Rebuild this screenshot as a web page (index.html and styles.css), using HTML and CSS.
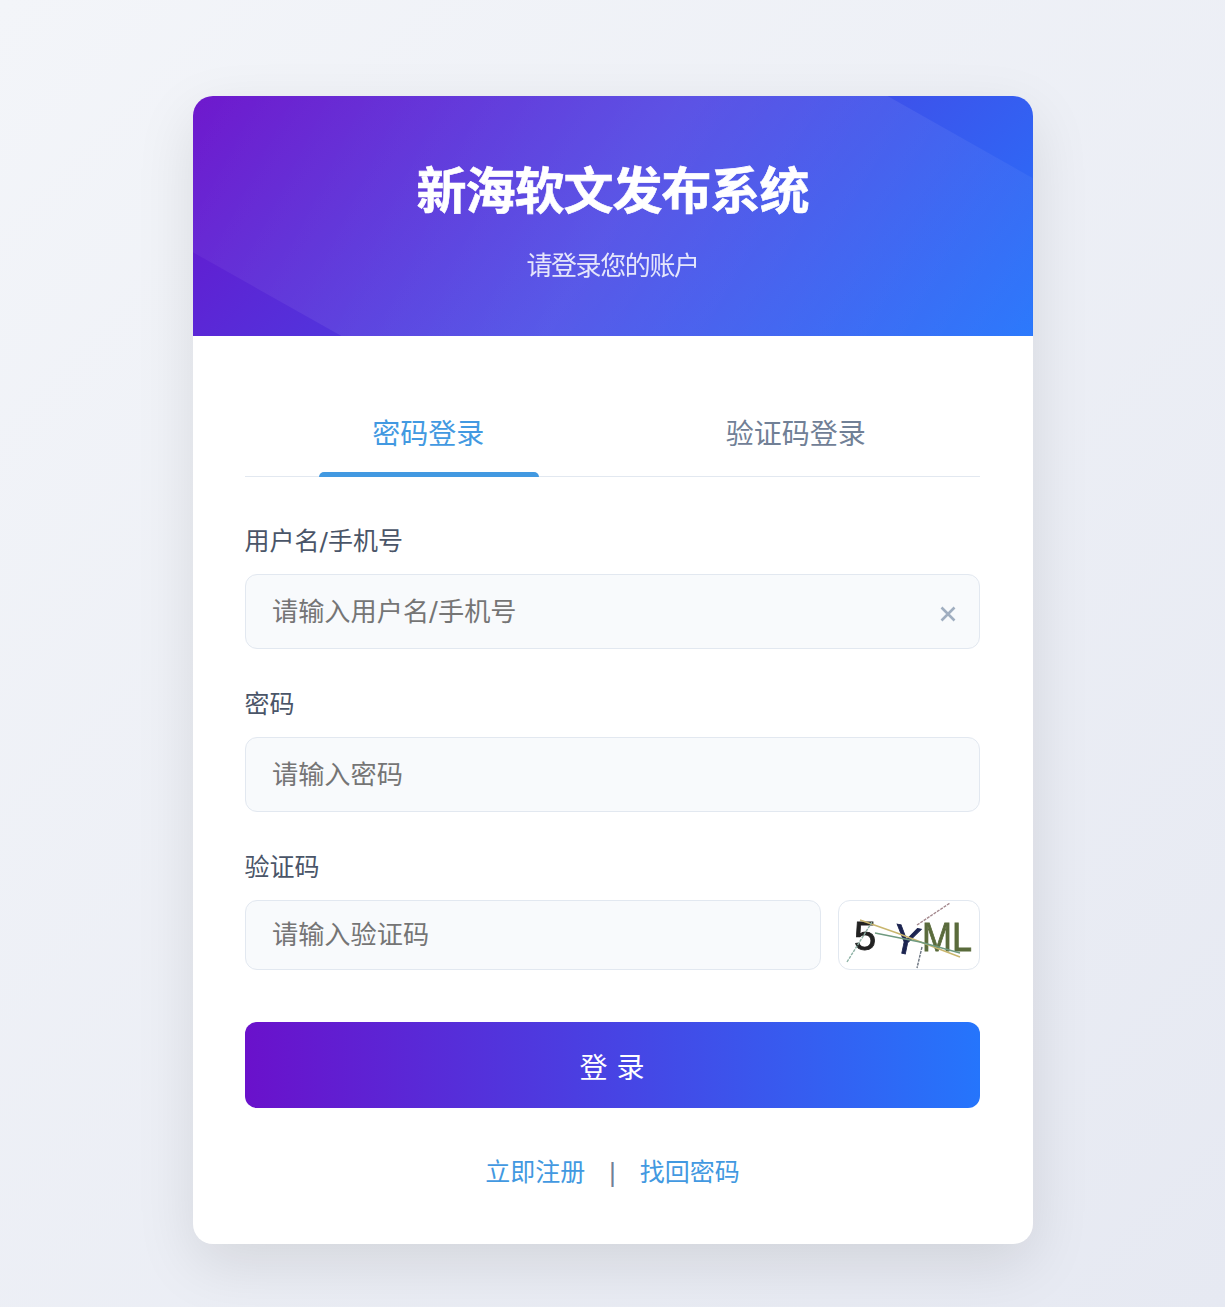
FILE: index.html
```html
<!DOCTYPE html>
<html lang="zh-CN">

<head>
    <meta charset="UTF-8">
    <meta name="viewport" content="width=device-width, initial-scale=1.0">
    <title>新海软文发布系统</title>
    <link rel="stylesheet" href="styles.css">
</head>

<body>
    <div class="card">
        <div class="header">
            <h1>新海软文发布系统</h1>
            <p>请登录您的账户</p>
        </div>

        <div class="content">
            <div class="tabs">
                <div class="tab active">密码登录</div>
                <div class="tab">验证码登录</div>
            </div>

            <form class="form">
                <div class="field">
                    <label for="username">用户名/手机号</label>
                    <div class="inputWrap">
                        <input type="text" id="username" placeholder="请输入用户名/手机号">
                        <svg class="clear" width="16" height="16" viewBox="0 0 16 16">
                            <path d="M1.5 1.5 14.5 14.5M14.5 1.5 1.5 14.5" />
                        </svg>
                    </div>
                </div>

                <div class="field">
                    <label for="password">密码</label>
                    <input type="password" id="password" placeholder="请输入密码">
                </div>

                <div class="field">
                    <label for="code">验证码</label>
                    <div class="codeRow">
                        <input type="text" id="code" class="short" placeholder="请输入验证码">
                        <div class="captcha">
                            <svg width="140" height="68" viewBox="0 0 140 68">
                                <g class="fuzzy">
                                    <text x="15" y="49" class="c1">5</text>
                                    <text x="54" y="53" class="c2" transform="rotate(12 68 40)">Y</text>
                                    <text x="83" y="50" class="c3" textLength="50" lengthAdjust="spacingAndGlyphs">ML</text>
                                    <path d="M21 19 L58 32 L121 56" stroke="#c9b66e" />
                                    <path d="M8 61 L33 21" stroke="#8fb3a6" stroke-dasharray="3 1" />
                                    <path d="M36 32 L81 41 L121 52" stroke="#6f9a80" />
                                    <path d="M78 24 L111 2" stroke="#a58a8f" stroke-dasharray="3 1" />
                                    <path d="M83 46 L78 67" stroke="#6b7480" stroke-dasharray="3 1" />
                                </g>
                            </svg>
                        </div>
                    </div>
                </div>

                <button type="button" class="btn">登 录</button>
            </form>

            <div class="links">
                <a href="#">立即注册</a>
                <span class="sep">|</span>
                <a href="#">找回密码</a>
            </div>
        </div>
    </div>
</body>

</html>
```

FILE: styles.css
```css
/* Reset CSS */
* {
    margin: 0;
    padding: 0;
    box-sizing: border-box;
}

body {
    font-family: "DejaVu Sans", "Noto Sans CJK SC", sans-serif;
    background: linear-gradient(135deg, #f3f5f9, #e6e9f2);
    min-height: 1307px;
    display: flex;
    justify-content: center;
    padding-top: 96px;
}

.card {
    width: 840px;
    height: 1148px;
    background: #fff;
    border-radius: 20px;
    overflow: hidden;
    box-shadow: 0 20px 60px rgba(0, 0, 0, 0.1);
}

.header {
    position: relative;
    height: 240px;
    padding-top: 62px;
    text-align: center;
    color: #fff;
    background: linear-gradient(135deg, #6a11cb, #2575fc);
}

.header::before {
    content: "";
    position: absolute;
    inset: 0;
    background: linear-gradient(120deg, rgba(255, 255, 255, 0.03), rgba(255, 255, 255, 0.1), rgba(255, 255, 255, 0.03));
    clip-path: polygon(0 0, 695px 0, 840px 82px, 840px 240px, 149px 240px, 0 156px);
}

.header h1,
.header p {
    position: relative;
}

.header h1 {
    font-size: 50px;
    line-height: 68px;
    letter-spacing: -1px;
    font-weight: 700;
    -webkit-text-stroke: 0.6px #fff;
}

.header p {
    margin-top: 23px;
    font-size: 26px;
    line-height: 34px;
    letter-spacing: -1.4px;
    opacity: 0.85;
}

.content {
    padding: 61px 53px 0 52px;
}

.tabs {
    display: flex;
    height: 80px;
    border-bottom: 1px solid #e2e8f0;
}

.tab {
    position: relative;
    flex: 1;
    text-align: center;
    font-size: 28px;
    line-height: 76px;
    color: #718096;
}

.tab.active {
    color: #4299e1;
}

.tab.active::after {
    content: "";
    position: absolute;
    left: 74px;
    bottom: -1px;
    width: 220px;
    height: 5px;
    background: #4299e1;
    border-radius: 5px 5px 0 0;
}

.form {
    margin-top: 46px;
}

.field {
    margin-bottom: 37px;
}

.field label {
    display: block;
    padding-top: 1px;
    margin-bottom: 15px;
    font-size: 25px;
    line-height: 35px;
    color: #4a5568;
}

.field:last-of-type {
    margin-bottom: 0;
}

.inputWrap {
    position: relative;
}

input {
    display: block;
    width: 100%;
    height: 75px;
    padding: 0 26.5px;
    font-family: inherit;
    font-size: 26.2px;
    color: #2d3748;
    background: #f8fafc;
    border: 1px solid #e2e8f0;
    border-radius: 12px;
    outline: none;
}

.clear {
    position: absolute;
    right: 24px;
    top: 32px;
}

.clear path {
    fill: none;
    stroke: #a0aec0;
    stroke-width: 2.6;
}

.codeRow {
    display: flex;
    gap: 17px;
}

input.short {
    flex: 1;
    width: auto;
    height: 70px;
}

.captcha {
    width: 142px;
    height: 70px;
    background: #fff;
    border: 1px solid #e2e8f0;
    border-radius: 12px;
    overflow: hidden;
}

.captcha svg {
    display: block;
}

.fuzzy {
    filter: blur(0.7px);
}

.fuzzy text {
    font-family: "Liberation Sans", sans-serif;
    font-size: 40px;
    stroke-width: 0.8px;
}

.fuzzy path {
    fill: none;
    stroke-width: 1.4;
}

.c1 {
    fill: #222;
    stroke: #222;
}

.c2 {
    fill: #1c2450;
    stroke: #1c2450;
}

.c3 {
    fill: #5a6b3c;
    stroke: #5a6b3c;
}

.btn {
    display: block;
    width: 100%;
    height: 86px;
    margin-top: 52px;
    padding-top: 2px;
    font-family: inherit;
    font-size: 28px;
    color: #fff;
    background: linear-gradient(90deg, #6a11cb, #2575fc);
    border: none;
    border-radius: 12px;
    cursor: pointer;
}

.links {
    margin-top: 47px;
    padding-left: 1px;
    display: flex;
    justify-content: center;
    gap: 23px;
    font-size: 25px;
    line-height: 36px;
}

.links a {
    color: #4299e1;
    text-decoration: none;
}

.sep {
    color: #718096;
}
```
